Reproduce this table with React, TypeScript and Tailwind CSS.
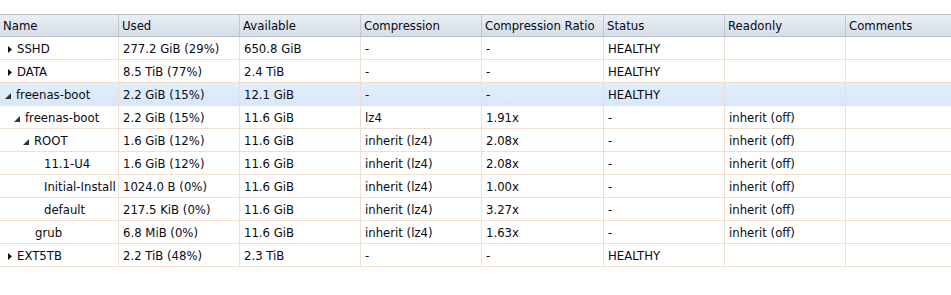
import React from 'react';

type Row = {
  name: string;
  level: number;
  toggle?: 'open' | 'closed';
  used: string;
  avail: string;
  comp: string;
  ratio: string;
  status: string;
  readonly: string;
  selected?: boolean;
};

const rows: Row[] = [
  { name: 'SSHD', level: 0, toggle: 'closed', used: '277.2 GiB (29%)', avail: '650.8 GiB', comp: '-', ratio: '-', status: 'HEALTHY', readonly: '' },
  { name: 'DATA', level: 0, toggle: 'closed', used: '8.5 TiB (77%)', avail: '2.4 TiB', comp: '-', ratio: '-', status: 'HEALTHY', readonly: '' },
  { name: 'freenas-boot', level: 0, toggle: 'open', used: '2.2 GiB (15%)', avail: '12.1 GiB', comp: '-', ratio: '-', status: 'HEALTHY', readonly: '', selected: true },
  { name: 'freenas-boot', level: 1, toggle: 'open', used: '2.2 GiB (15%)', avail: '11.6 GiB', comp: 'lz4', ratio: '1.91x', status: '-', readonly: 'inherit (off)' },
  { name: 'ROOT', level: 2, toggle: 'open', used: '1.6 GiB (12%)', avail: '11.6 GiB', comp: 'inherit (lz4)', ratio: '2.08x', status: '-', readonly: 'inherit (off)' },
  { name: '11.1-U4', level: 3, used: '1.6 GiB (12%)', avail: '11.6 GiB', comp: 'inherit (lz4)', ratio: '2.08x', status: '-', readonly: 'inherit (off)' },
  { name: 'Initial-Install', level: 3, used: '1024.0 B (0%)', avail: '11.6 GiB', comp: 'inherit (lz4)', ratio: '1.00x', status: '-', readonly: 'inherit (off)' },
  { name: 'default', level: 3, used: '217.5 KiB (0%)', avail: '11.6 GiB', comp: 'inherit (lz4)', ratio: '3.27x', status: '-', readonly: 'inherit (off)' },
  { name: 'grub', level: 2, used: '6.8 MiB (0%)', avail: '11.6 GiB', comp: 'inherit (lz4)', ratio: '1.63x', status: '-', readonly: 'inherit (off)' },
  { name: 'EXT5TB', level: 0, toggle: 'closed', used: '2.2 TiB (48%)', avail: '2.3 TiB', comp: '-', ratio: '-', status: 'HEALTHY', readonly: '' },
];

const headers = ['Name', 'Used', 'Available', 'Compression', 'Compression Ratio', 'Status', 'Readonly', 'Comments'];
const cols = 'grid-cols-[119px_121px_121px_121px_122px_121px_121px_1fr]';

const Toggle = ({ kind }: { kind: 'open' | 'closed' }) =>
  kind === 'closed' ? (
    <svg width="4" height="7" viewBox="0 0 4 7" className="shrink-0">
      <path d="M0 0 L4 3.5 L0 7 Z" fill="#111" />
    </svg>
  ) : (
    <svg width="6" height="6" viewBox="0 0 6 6" className="shrink-0">
      <path d="M6 0 L6 6 L0 6 Z" fill="#333" />
    </svg>
  );

export default function App() {
  return (
    <div className="w-[951px] h-[295px] bg-white pt-[14px] text-[11.7px] text-[#0a0a14] [font-family:'DejaVu_Sans',Verdana,sans-serif]">
      {/* header */}
      <div className={`grid ${cols} h-[23px] border-y border-[#b9c0c9] bg-gradient-to-b from-[#eaeff5] to-[#d5dde7]`}>
        {headers.map((h) => (
          <div key={h} className="flex items-center pt-[2px] pl-[3px] border-r border-[#c0c7d0] last:border-r-0 whitespace-nowrap overflow-hidden">
            {h}
          </div>
        ))}
      </div>
      {/* tree rows */}
      {rows.map((r, i) => {
        const cells = [r.used, r.avail, r.comp, r.ratio, r.status, r.readonly, ''];
        return (
          <div
            key={i}
            className={`grid ${cols} h-[23px] border-b border-[#efdfd0] ${r.selected ? 'bg-gradient-to-b from-[#e2eefb] to-[#d8e8f8]' : 'bg-white'}`}
          >
            <div className="flex items-center pt-[3px] border-r border-[#efdfd0] whitespace-nowrap overflow-hidden">
              {r.toggle === 'closed' && (
                <span className="flex w-[4px] justify-end mr-[5px]" style={{ marginLeft: 8 + r.level * 9 }}>
                  <Toggle kind="closed" />
                </span>
              )}
              {r.toggle === 'open' && (
                <span className="flex mr-[5px]" style={{ marginLeft: 5 + r.level * 9 }}>
                  <Toggle kind="open" />
                </span>
              )}
              {!r.toggle && <span style={{ marginLeft: 17 + r.level * 9 }} />}
              <span>{r.name}</span>
            </div>
            {cells.map((c, j) => (
              <div key={j} className="flex items-center pt-[3px] pl-[4px] border-r border-[#efdfd0] last:border-r-0 whitespace-nowrap overflow-hidden">
                {c}
              </div>
            ))}
          </div>
        );
      })}
    </div>
  );
}
